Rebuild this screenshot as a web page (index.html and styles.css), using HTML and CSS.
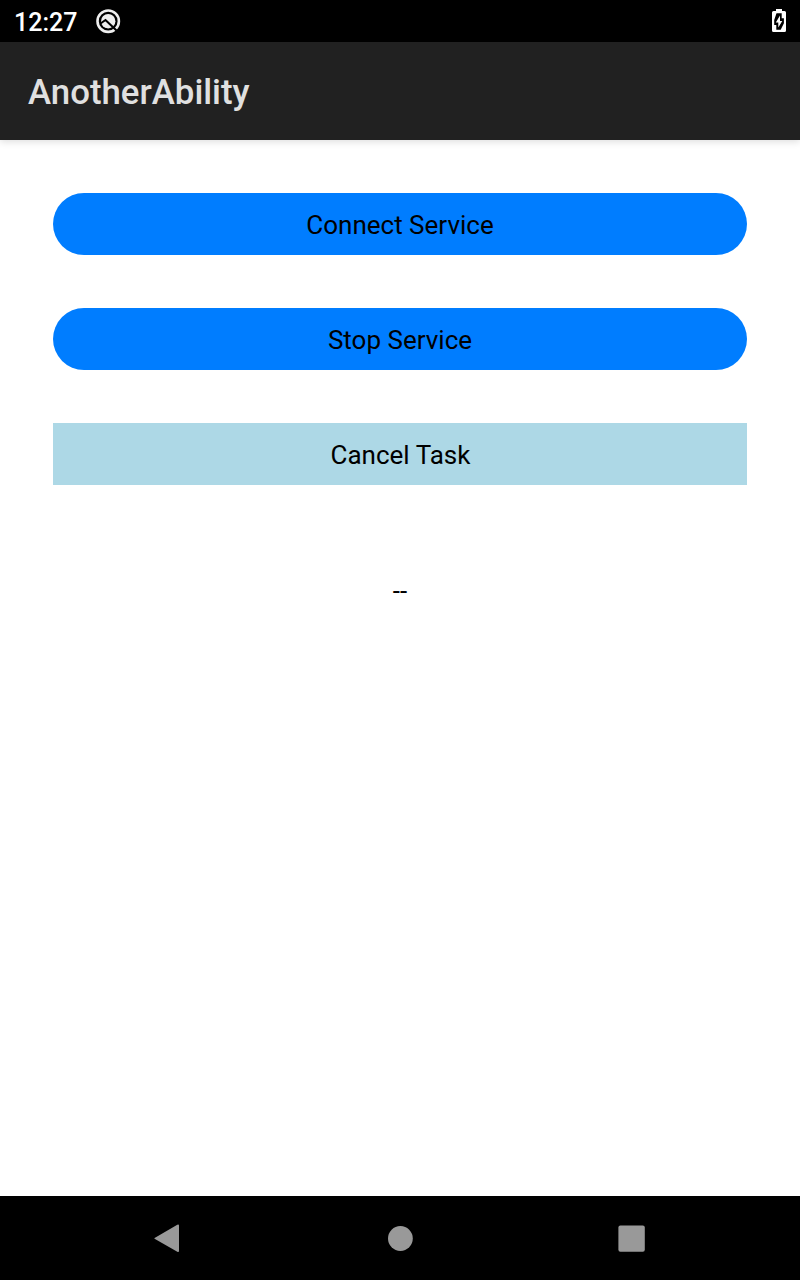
FILE: index.html
```html
<!DOCTYPE html>
<html lang="en">
<head>
<meta charset="utf-8">
<title>AnotherAbility</title>
<link rel="stylesheet" href="styles.css">
</head>
<body>
<div class="status">
  <span class="clock">12:27</span>
  <svg class="notice" width="26" height="26" viewBox="0 0 26 26" fill="none"><circle cx="13.200" cy="13.200" r="10.700" stroke="#eee" stroke-width="2.600"/><circle cx="13.200" cy="13.200" r="7.200" fill="#eee"/><path d="M5.500 15.500L10.500 12L21.500 22.500" stroke="#000" stroke-width="2.100"/><path d="M7.500 17.500L10.200 14.800L15 19.500Q10 21 7.500 17.500z" fill="#eee"/></svg>
  <svg class="battery" width="14" height="24" viewBox="0 0 14 24"><path fill="#fff" d="M4 0h6v2h2.500q1.500 0 1.500 1.500v18q0 1.500-1.500 1.500h-11Q0 23 0 21.500v-18Q0 2 1.500 2H4z"/><path d="M4.500 4.300h5.200v5h2.200v5l-3.200 6.400H4.300V16H2.200v-5z"/><path fill="#fff" d="M8 6.500L3.800 13.500h2.500v5L10.300 12H8z"/></svg>
</div>
<header class="bar">AnotherAbility</header>
<main class="content">
  <button class="button">Connect Service</button>
  <button class="button">Stop Service</button>
  <button class="button cancel">Cancel Task</button>
  <div class="result">--</div>
</main>
<nav class="nav">
  <svg width="26" height="30" viewBox="0 0 26 30"><path fill="#999" d="M1 13.700L23.300 .7q1.700-.9 1.700 1v25q0 1.900-1.700 1L1 15.100q-1.200-.7 0-1.400z"/></svg>
  <svg width="28" height="26" viewBox="0 0 28 26"><circle cx="15.400" cy="12.500" r="12.400" fill="#999"/></svg>
  <svg width="28" height="28" viewBox="0 0 28 28"><rect x=".4" y=".4" width="26.400" height="26.300" rx="2" fill="#999"/></svg>
</nav>
</body>
</html>
```
FILE: styles.css
```css
* { box-sizing: border-box; }
body { margin: 0; height: 1280px; display: flex; flex-direction: column; background: #fff; font-family: Roboto, sans-serif; }
.status { height: 42px; background: #000; color: #fff; display: flex; align-items: center; padding: 0 14px; }
.clock { font-size: 25px; font-weight: 500; line-height: 42px; padding-top: 3px; }
.notice { margin-left: 18px; }
.battery { margin-left: auto; }
.bar { height: 98px; line-height: 100px; padding-left: 28px; background: #212121; color: #e0e0e0; font-size: 34.800px; font-weight: 500; box-shadow: 0 2px 7px rgba(0,0,0,.13); }
.content { flex: 1; display: flex; flex-direction: column; padding: 53px; gap: 53px; }
.button { height: 62px; padding: 1px 0 0; border: 0; border-radius: 31px; background: #007dff; color: #000; font: 26px Roboto, sans-serif; }
.cancel { background: #add8e6; border-radius: 0; padding-left: 1px; }
.result { height: 106px; line-height: 107px; text-align: center; font-size: 26px; }
.nav { height: 84px; background: #000; display: flex; align-items: center; justify-content: space-between; padding: 2px 154px 0; }
```
